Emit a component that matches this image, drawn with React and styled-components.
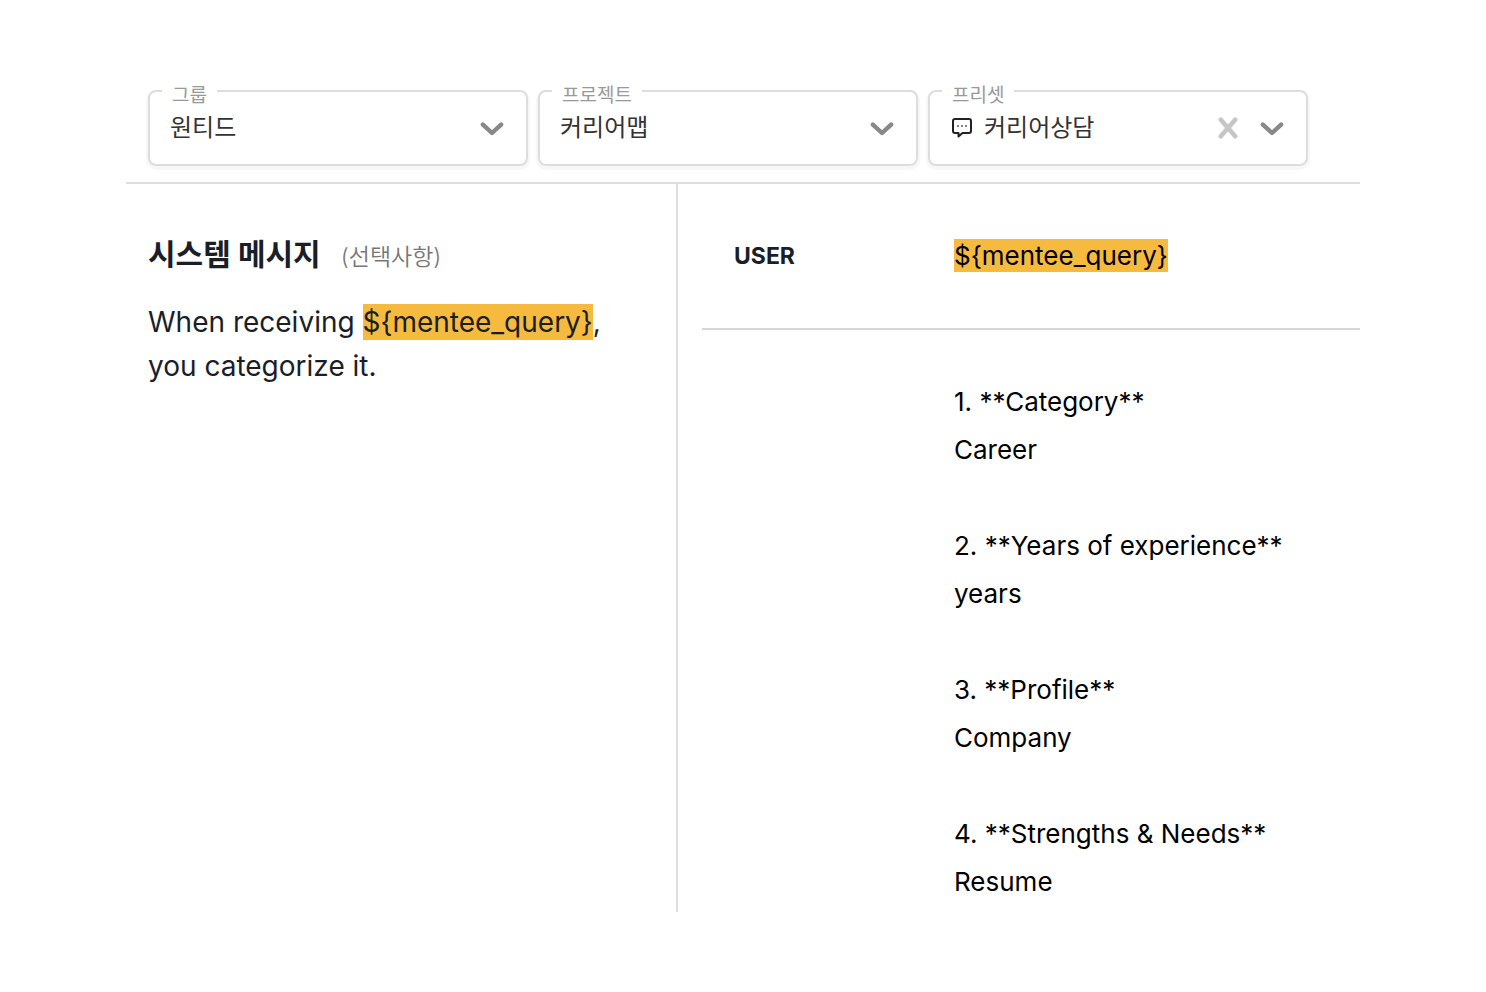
import { useState } from "react";
import styled, { createGlobalStyle } from "styled-components";

const GlobalStyle = createGlobalStyle`
  * {
    box-sizing: border-box;
  }
  body {
    margin: 0;
    background-color: #fff;
    color: #1a1e27;
    font-family: Inter, "Noto Sans CJK KR", sans-serif;
  }
`;

const Page = styled.main`
  padding: 90px 126px 80px;
`;

const Filters = styled.div`
  display: grid;
  grid-template-columns: repeat(3, 1fr);
  gap: 10px;
  padding: 0 52px 16px 22px;
  border-bottom: 2px solid #dddddd;
`;

const Field = styled.div`
  position: relative;
  height: 76px;
`;

const FieldLabel = styled.label`
  position: absolute;
  top: -6px;
  left: 14px;
  padding: 0 10px;
  background-color: #fff;
  color: #999;
  font-size: 19px;
  line-height: 24px;
`;

const Select = styled.select`
  appearance: none;
  width: 100%;
  height: 100%;
  padding: 0 64px 2px ${(props) => (props.$hasIcon ? "54px" : "20px")};
  border: 2px solid #dddddd;
  border-radius: 8px;
  background-color: #fff;
  box-shadow: 0 2px 0 2px #f7f7f7;
  color: #333;
  font-family: inherit;
  font-size: 24px;
`;

const LeadingIcon = styled.svg`
  position: absolute;
  top: 27px;
  left: 23px;
  width: 22px;
  height: 22px;
  pointer-events: none;
`;

const Actions = styled.div`
  position: absolute;
  top: 26px;
  right: 24px;
  display: flex;
  gap: 20px;
  pointer-events: none;
`;

const ClearButton = styled.button`
  width: 24px;
  height: 24px;
  padding: 0;
  border: none;
  background: none;
  cursor: pointer;
  pointer-events: auto;
`;

const Columns = styled.div`
  display: grid;
  grid-template-columns: 550fr 684fr;
`;

const SystemPanel = styled.section`
  padding: 48px 22px;
`;

const SystemHeading = styled.div`
  display: flex;
  align-items: baseline;
  gap: 20px;
  margin-bottom: 24px;
`;

const Title = styled.h2`
  margin: 0;
  font-size: 30px;
  font-weight: 700;
  line-height: 44px;
`;

const Optional = styled.span`
  color: #777;
  font-size: 23px;
  font-weight: 350;
`;

const SystemText = styled.p`
  margin: 0;
  font-size: 28px;
  line-height: 44px;
`;

const Variable = styled.mark`
  padding: 1px 0;
  background-color: #f6bb3e;
  color: inherit;
`;

const Messages = styled.section`
  padding-left: 24px;
  border-left: 2px solid #dddddd;
`;

const Message = styled.article`
  display: grid;
  grid-template-columns: 220px 1fr;
  padding: 48px 0 ${(props) => (props.$last ? "6px" : "48px")} 32px;
  border-bottom: ${(props) => (props.$last ? "none" : "2px solid #d5d6e0")};
  line-height: 48px;
`;

const Role = styled.h3`
  margin: 0;
  font-size: 23px;
  font-weight: 700;
`;

const Content = styled.div`
  color: #000;
  font-size: 26px;
  white-space: pre-wrap;
`;

const answer = `1. **Category**
Career

2. **Years of experience**
years

3. **Profile**
Company

4. **Strengths & Needs**
Resume`;

function Chevron() {
  return (
    <svg width="24" height="24" viewBox="0 0 24 24" aria-hidden="true">
      <path
        d="M2.9 8.6L12 17L21.1 8.6"
        fill="none"
        stroke="#888"
        strokeWidth="4.4"
        strokeLinecap="round"
        strokeLinejoin="round"
      />
    </svg>
  );
}

function ChatIcon() {
  return (
    <LeadingIcon viewBox="0 0 22 22" aria-hidden="true">
      <path
        d="M4 2H18Q20 2 20 4V14Q20 16 18 16H11.5L7.5 19.5V16H4Q2 16 2 14V4Q2 2 4 2Z"
        fill="none"
        stroke="#222"
        strokeWidth="2"
        strokeLinejoin="round"
      />
      <path
        d="M6.2 8.2h1.6v1.6H6.2zM10.2 8.2h1.6v1.6h-1.6zM14.2 8.2h1.6v1.6h-1.6z"
        fill="#333"
      />
    </LeadingIcon>
  );
}

function SelectField({ id, label, option, icon, clearable }) {
  const [value, setValue] = useState(option);

  return (
    <Field>
      <Select
        id={id}
        value={value}
        $hasIcon={Boolean(icon)}
        onChange={(e) => setValue(e.target.value)}
      >
        {clearable && <option value="" />}
        <option value={option}>{option}</option>
      </Select>
      <FieldLabel htmlFor={id}>{label}</FieldLabel>
      {icon}
      <Actions>
        {clearable && (
          <ClearButton
            type="button"
            aria-label="clear"
            onClick={() => setValue("")}
          >
            <svg width="24" height="24" viewBox="0 0 24 24">
              <path
                d="M4.8 3.8L19.2 20.2M19.2 3.8L4.8 20.2"
                stroke="#c6c6c6"
                strokeWidth="4.6"
                strokeLinecap="round"
              />
            </svg>
          </ClearButton>
        )}
        <Chevron />
      </Actions>
    </Field>
  );
}

function App() {
  return (
    <>
      <GlobalStyle />
      <Page>
        <Filters>
          <SelectField id="group" label="그룹" option="원티드" />
          <SelectField id="project" label="프로젝트" option="커리어맵" />
          <SelectField
            id="preset"
            label="프리셋"
            option="커리어상담"
            icon={<ChatIcon />}
            clearable
          />
        </Filters>
        <Columns>
          <SystemPanel>
            <SystemHeading>
              <Title>시스템 메시지</Title>
              <Optional>(선택사항)</Optional>
            </SystemHeading>
            <SystemText>
              When receiving <Variable>{"${mentee_query}"}</Variable>,
              <br />
              you categorize it.
            </SystemText>
          </SystemPanel>
          <Messages>
            <Message>
              <Role>USER</Role>
              <Content>
                <Variable>{"${mentee_query}"}</Variable>
              </Content>
            </Message>
            <Message $last>
              <span />
              <Content>{answer}</Content>
            </Message>
          </Messages>
        </Columns>
      </Page>
    </>
  );
}

export default App;
